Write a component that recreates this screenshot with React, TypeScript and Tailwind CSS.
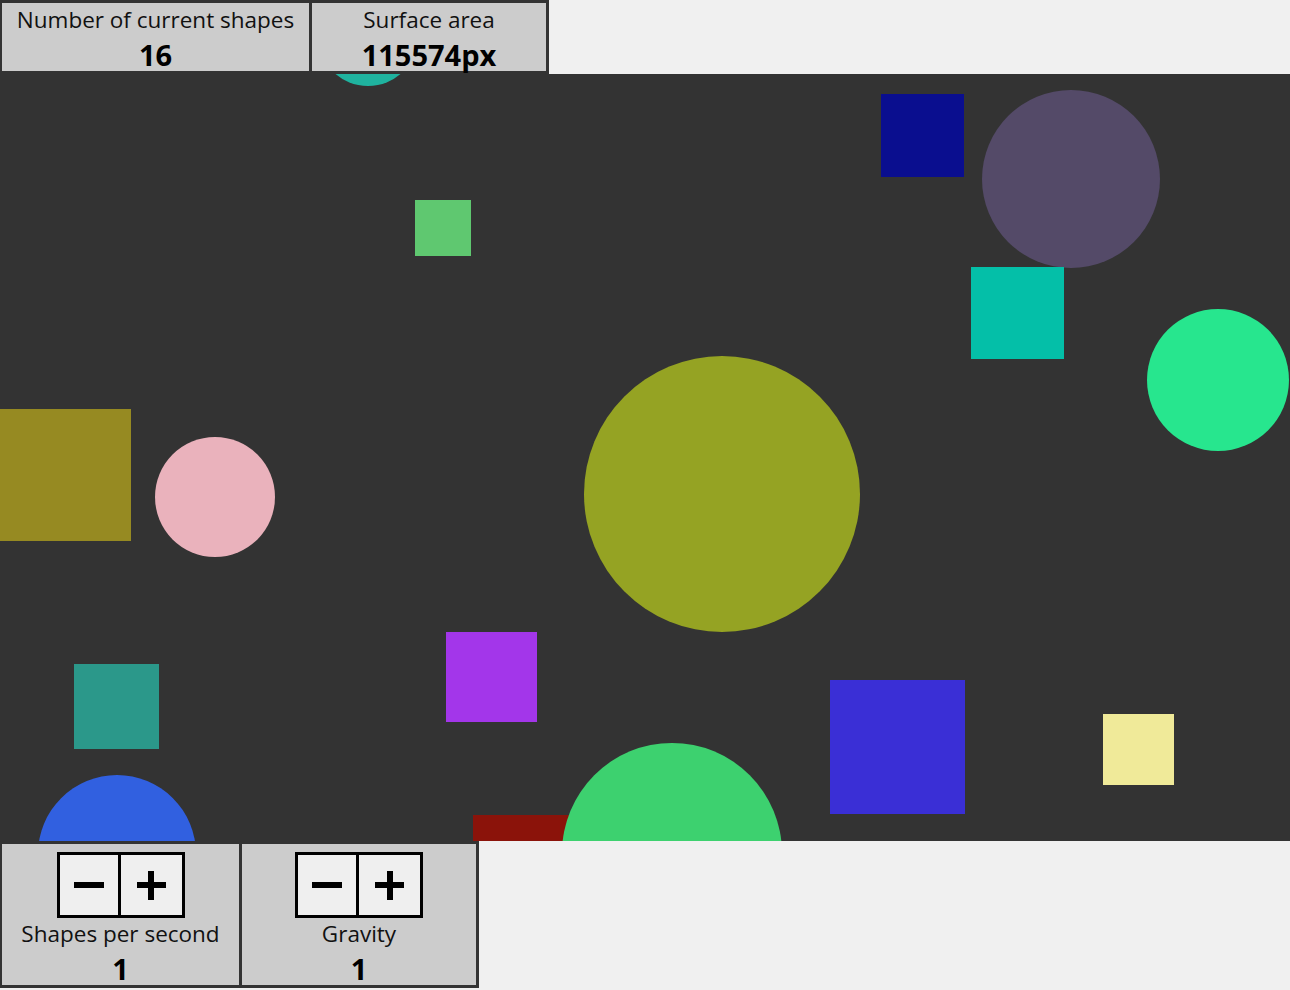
const shapes = [
  { kind: 'circle', x: 368, y: -38, r: 50, color: '#1fb39f' },
  { kind: 'rect', x: 881, y: 20, w: 83, h: 83, color: '#0a0e8f' },
  { kind: 'circle', x: 1071, y: 105, r: 89, color: '#544a68' },
  { kind: 'rect', x: 415, y: 126, w: 56, h: 56, color: '#5fc870' },
  { kind: 'rect', x: 971, y: 193, w: 93, h: 92, color: '#04bfa8' },
  { kind: 'circle', x: 1218, y: 306, r: 71, color: '#27e68e' },
  { kind: 'circle', x: 722, y: 420, r: 138, color: '#95a323' },
  { kind: 'rect', x: -1, y: 335, w: 132, h: 132, color: '#968a22' },
  { kind: 'circle', x: 215, y: 423, r: 60, color: '#eab2bc' },
  { kind: 'rect', x: 446, y: 558, w: 91, h: 90, color: '#a336ea' },
  { kind: 'rect', x: 74, y: 590, w: 85, h: 85, color: '#2b988a' },
  { kind: 'rect', x: 830, y: 606, w: 135, h: 134, color: '#3a2fd6' },
  { kind: 'rect', x: 1103, y: 640, w: 71, h: 71, color: '#f0ea99' },
  { kind: 'circle', x: 117, y: 780, r: 79, color: '#3160e0' },
  { kind: 'rect', x: 473, y: 741, w: 120, h: 60, color: '#8b130a' },
  { kind: 'circle', x: 672, y: 779, r: 110, color: '#3dd16f' },
];

const font = { fontFamily: '"Open Sans", "Noto Sans", sans-serif' };

function StatPanel({ label, value, className }: { label: string; value: string; className: string }) {
  return (
    <div className={`bg-[#cccccc] border-[#333333] flex flex-col items-center pt-[1px] ${className}`}>
      <div className="text-[22.5px] leading-[32px] text-[#111] shrink-0">{label}</div>
      <div className="text-[29px] leading-[38px] font-bold text-black shrink-0">{value}</div>
    </div>
  );
}

function Stepper({ label, value, className }: { label: string; value: string; className: string }) {
  return (
    <div className={`bg-[#cccccc] border-[#333333] flex flex-col items-center pt-[8px] ${className}`}>
      <div className="flex border-[3px] border-black shrink-0">
        <button className="w-[61px] h-[60px] bg-[#efefef] flex items-center justify-center border-r-[3px] border-black">
          <span className="block w-[30px] h-[6px] bg-black" />
        </button>
        <button className="w-[61px] h-[60px] bg-[#efefef] flex items-center justify-center relative">
          <span className="absolute w-[29px] h-[6px] bg-black" />
          <span className="absolute w-[6px] h-[29px] bg-black" />
        </button>
      </div>
      <div className="text-[22.5px] leading-[32px] text-[#111] shrink-0">{label}</div>
      <div className="text-[29px] leading-[38px] font-bold text-black shrink-0">{value}</div>
    </div>
  );
}

export default function App() {
  return (
    <div className="w-[1290px] h-[990px] bg-[#f0f0f0] overflow-hidden" style={font}>
      {/* Stats */}
      <div className="flex h-[74px] relative z-10">
        <StatPanel
          label="Number of current shapes"
          value="16"
          className="w-[312px] border-t-[3px] border-b-[3px] border-l-2 border-r-[3px]"
        />
        <StatPanel
          label="Surface area"
          value="115574px"
          className="w-[237px] border-t-[3px] border-b-[3px] border-r-[3px]"
        />
      </div>

      {/* Canvas */}
      <div className="relative w-[1290px] h-[767px] bg-[#333333] overflow-hidden">
        {shapes.map((s, i) =>
          s.kind === 'circle' ? (
            <div
              key={i}
              className="absolute rounded-full"
              style={{ left: s.x - s.r!, top: s.y - s.r!, width: s.r! * 2, height: s.r! * 2, background: s.color }}
            />
          ) : (
            <div
              key={i}
              className="absolute"
              style={{ left: s.x, top: s.y, width: s.w, height: s.h, background: s.color }}
            />
          )
        )}
      </div>

      {/* Controls */}
      <div className="flex h-[147px] relative z-10">
        <Stepper
          label="Shapes per second"
          value="1"
          className="w-[242px] border-t-[3px] border-b-[3px] border-l-2 border-r-[3px]"
        />
        <Stepper label="Gravity" value="1" className="w-[237px] border-t-[3px] border-b-[3px] border-r-[3px]" />
      </div>
    </div>
  );
}
